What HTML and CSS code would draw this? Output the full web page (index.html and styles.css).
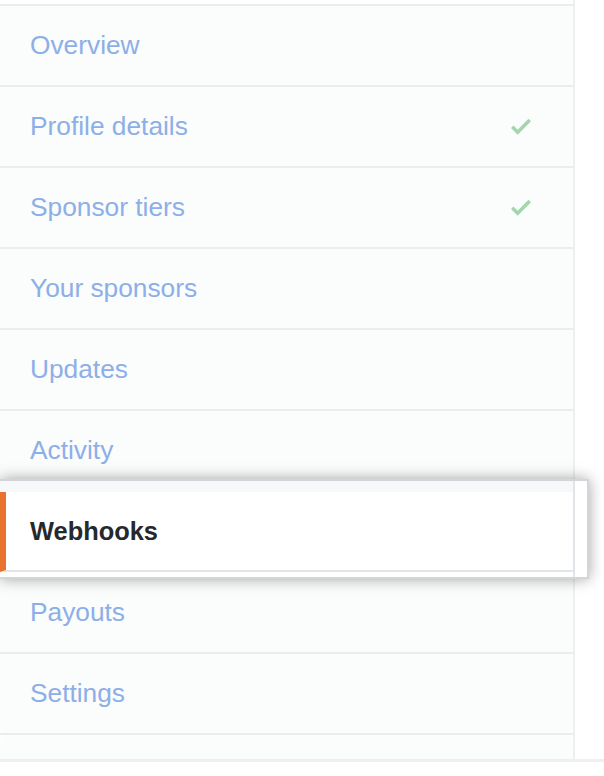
FILE: index.html
```html
<!DOCTYPE html>
<html lang="en">
<head>
<meta charset="utf-8">
<title>Sponsors dashboard menu</title>
<link rel="stylesheet" href="styles.css">
</head>
<body>
<div class="page">
  <nav class="menu">
    <div class="group first">
      <a class="item">Overview</a>
      <a class="item">Profile details
        <svg class="check" viewBox="0 0 12 16" aria-hidden="true"><path d="M12 5l-8 8-4-4 1.5-1.5L4 10l6.5-6.5L12 5z"/></svg>
      </a>
      <a class="item">Sponsor tiers
        <svg class="check" viewBox="0 0 12 16" aria-hidden="true"><path d="M12 5l-8 8-4-4 1.5-1.5L4 10l6.5-6.5L12 5z"/></svg>
      </a>
    </div>
    <div class="group">
      <a class="item">Your sponsors</a>
      <a class="item">Updates</a>
      <a class="item">Activity</a>
      <div class="callout">
        <div class="callout-inner">
          <div class="strip"></div>
          <a class="item selected">Webhooks</a>
          <div class="after"></div>
        </div>
      </div>
      <a class="item">Payouts</a>
      <a class="item">Settings</a>
    </div>
    <div class="group tail"></div>
  </nav>
</div>
</body>
</html>
```

FILE: styles.css
```css
html, body {
  margin: 0;
  padding: 0;
  background: #ffffff;
}

body {
  font-family: "Liberation Sans", Arial, sans-serif;
  overflow: hidden;
}

.page {
  width: 604px;
  border-bottom: 3px solid #efefef;
}

.menu {
  width: 573px;
  padding-top: 4px;
  border-right: 2px solid #efefef;
  display: flex;
  flex-direction: column;
}

.group {
  background: #fbfcfc;
  border-radius: 0 0 6px 6px;
  display: flex;
  flex-direction: column;
}

.group.first {
  border-top: 2px solid #ebecee;
}

.item {
  height: 79px;
  border-bottom: 2px solid #ebecee;
  padding: 0 42px 0 30px;
  display: flex;
  align-items: center;
  justify-content: space-between;
  font-size: 26.3px;
  color: #8cafe8;
  text-decoration: none;
  box-sizing: content-box;
}

.check {
  width: 20px;
  height: 26.7px;
  fill: #a3d6ac;
}

.tail {
  height: 24px;
  border-radius: 6px 6px 0 0;
}

.callout {
  position: relative;
  z-index: 2;
  margin: -13px -16px -6px 0;
  background: #ffffff;
  border: 2px solid #d3d5d8;
  border-left: none;
  box-shadow: 0 0 14px rgba(0, 0, 0, 0.36);
  padding-right: 12px;
}

.callout-inner {
  border-right: 2px solid #e1e4e8;
  display: flex;
  flex-direction: column;
}

.strip {
  height: 11px;
  background: #f6f8fa;
}

.item.selected {
  height: 78px;
  background: #ffffff;
  border-left: 6px solid #e8732e;
  border-bottom: 2px solid #e1e4e8;
  padding-left: 24px;
  color: #24292e;
  font-weight: 700;
  font-size: 25.4px;
}

.after {
  height: 5px;
  background: #ffffff;
}
```
